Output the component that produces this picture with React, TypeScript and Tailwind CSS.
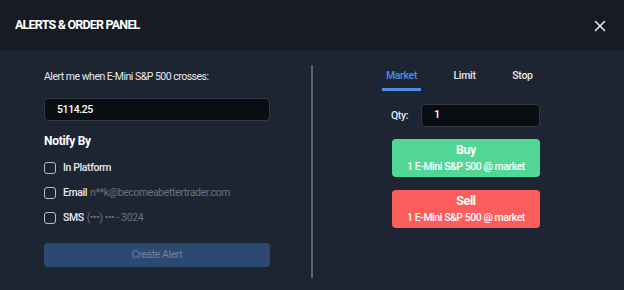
import { useState } from 'react';

const font = { fontFamily: 'Roboto, "Liberation Sans", sans-serif' };

function Checkbox({ label, detail }: { label: string; detail?: string }) {
  return (
    <label className="flex items-center h-[25px] text-[10.5px] tracking-[-0.4px] text-[#e6e8ec]">
      <span className="w-[12px] h-[12px] rounded-[3px] border border-[#b8bcc4] mr-[7px]" />
      <span className="font-medium">{label}</span>
      {detail && <span className="ml-[3px] text-[#6b7280]">{detail}</span>}
    </label>
  );
}

function OrderButton({ side, color }: { side: string; color: string }) {
  return (
    <button className={`w-[148px] h-[38px] rounded-[4px] ${color} text-white flex flex-col items-center justify-center leading-none tracking-[-0.45px]`}>
      <span className="text-[12.5px] font-bold">{side}</span>
      <span className="text-[10.5px] mt-[5px] font-medium">1 E-Mini S&amp;P 500 @ market</span>
    </button>
  );
}

export default function App() {
  const [tab, setTab] = useState('Market');
  const tabs = [
    { name: 'Market', cls: 'ml-0' },
    { name: 'Limit', cls: 'ml-[24px]' },
    { name: 'Stop', cls: 'ml-[19px]' },
  ];

  return (
    <div style={font} className="w-[624px] h-[290px] bg-[#1e2532] flex flex-col overflow-hidden">
      {/* Header */}
      <div className="h-[51px] shrink-0 bg-[#161b24] flex items-center justify-between pl-[15px] pr-[18px]">
        <h1 className="text-[12.5px] font-bold text-white uppercase tracking-[-0.8px]">Alerts &amp; Order Panel</h1>
        <svg width="12" height="12" viewBox="0 0 12 12" stroke="#e5e7eb" strokeWidth="1.6" strokeLinecap="round">
          <line x1="1.5" y1="1.5" x2="10.5" y2="10.5" />
          <line x1="10.5" y1="1.5" x2="1.5" y2="10.5" />
        </svg>
      </div>

      <div className="flex flex-1">
        {/* Alert column */}
        <div className="w-[311px] pl-[44px] pr-[41px] pt-[18px]">
          <p className="text-[10.5px] leading-[16px] tracking-[-0.5px] text-[#e6e8ec]">Alert me when E-Mini S&amp;P 500 crosses:</p>
          <div className="mt-[13px] h-[23px] rounded-[4px] bg-[#0a0d11] border border-[#333a46] flex items-center px-[12px] text-[10.5px] tracking-[-0.4px] text-white font-medium">
            5114.25
          </div>
          <h2 className="mt-[11px] text-[12px] leading-[18px] tracking-[-0.3px] font-bold text-white">Notify By</h2>
          <div className="mt-[5px]">
            <Checkbox label="In Platform" />
            <Checkbox label="Email" detail="n**k@becomeabettertrader.com" />
            <Checkbox label="SMS" detail="(•••) ••• - 3024" />
          </div>
          <button className="mt-[13px] w-full h-[24px] rounded-[4px] bg-[#2c4a6f] text-[10.5px] tracking-[-0.4px] text-[#6f829a]">
            Create Alert
          </button>
        </div>

        {/* Divider */}
        <div className="w-[2px] bg-[#5b6272] mt-[14px] mb-[12px]" />

        {/* Order column */}
        <div className="flex-1 pl-[69px] pt-[17px]">
          <div className="flex">
            {tabs.map((t) => (
              <button
                key={t.name}
                onClick={() => setTab(t.name)}
                className={`${t.cls} w-[39px] text-[10.5px] leading-[16px] tracking-[-0.3px] font-medium pb-[4px] border-b-[3px] ${
                  tab === t.name ? 'text-[#4b8fe0] border-[#4b8fe0]' : 'text-[#e6e8ec] border-transparent'
                }`}
              >
                {t.name}
              </button>
            ))}
          </div>
          <div className="mt-[13px] ml-[9px] flex items-center">
            <span className="w-[30px] text-[10.5px] tracking-[-0.4px] font-medium text-[#e6e8ec]">Qty:</span>
            <div className="w-[119px] h-[23px] rounded-[4px] bg-[#0a0d11] border border-[#333a46] flex items-center px-[12px] text-[11px] text-white font-medium">
              1
            </div>
          </div>
          <div className="ml-[10px] mt-[12px] flex flex-col gap-[13px]">
            <OrderButton side="Buy" color="bg-[#52d696]" />
            <OrderButton side="Sell" color="bg-[#fd5c5c]" />
          </div>
        </div>
      </div>
    </div>
  );
}
